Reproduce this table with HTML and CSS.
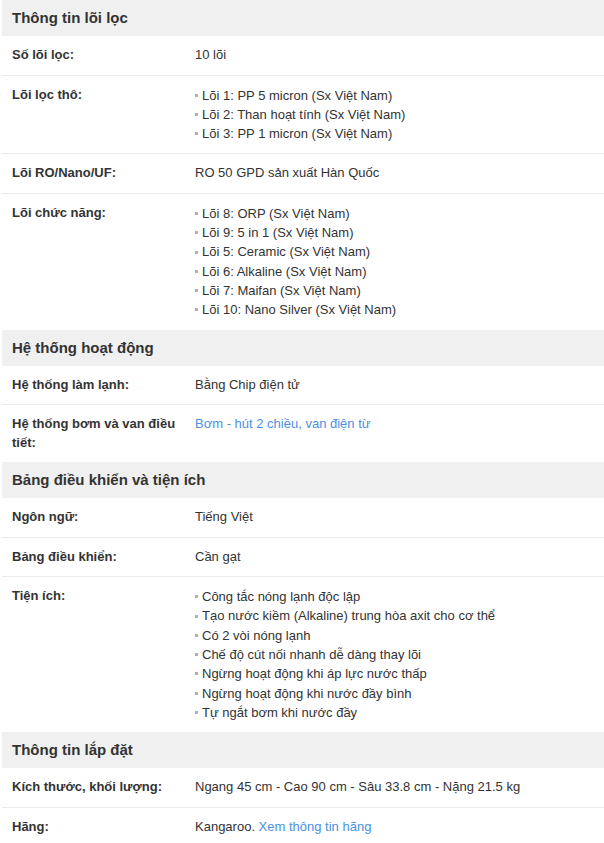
FILE: index.html
```html
<!DOCTYPE html>
<html lang="vi">
<head>
<meta charset="utf-8">
<title>Thông số kỹ thuật</title>
<link rel="stylesheet" href="styles.css">
</head>
<body>
<div class="specs">
  <section class="group">
    <h3 class="group-title">Thông tin lõi lọc</h3>
    <div class="row"><div class="label">Số lõi lọc:</div><div class="value">10 lõi</div></div>
    <div class="row"><div class="label">Lõi lọc thô:</div><div class="value"><ul class="list">
      <li>Lõi 1: PP 5 micron (Sx Việt Nam)</li>
      <li>Lõi 2: Than hoạt tính (Sx Việt Nam)</li>
      <li>Lõi 3: PP 1 micron (Sx Việt Nam)</li>
    </ul></div></div>
    <div class="row"><div class="label">Lõi RO/Nano/UF:</div><div class="value">RO 50 GPD sản xuất Hàn Quốc</div></div>
    <div class="row"><div class="label">Lõi chức năng:</div><div class="value"><ul class="list">
      <li>Lõi 8: ORP (Sx Việt Nam)</li>
      <li>Lõi 9: 5 in 1 (Sx Việt Nam)</li>
      <li>Lõi 5: Ceramic (Sx Việt Nam)</li>
      <li>Lõi 6: Alkaline (Sx Việt Nam)</li>
      <li>Lõi 7: Maifan (Sx Việt Nam)</li>
      <li>Lõi 10: Nano Silver (Sx Việt Nam)</li>
    </ul></div></div>
  </section>
  <section class="group">
    <h3 class="group-title">Hệ thống hoạt động</h3>
    <div class="row"><div class="label">Hệ thống làm lạnh:</div><div class="value">Bằng Chip điện tử</div></div>
    <div class="row"><div class="label">Hệ thống bơm và van điều tiết:</div><div class="value"><a class="link" href="#">Bơm - hút 2 chiều, van điện từ</a></div></div>
  </section>
  <section class="group">
    <h3 class="group-title">Bảng điều khiển và tiện ích</h3>
    <div class="row"><div class="label">Ngôn ngữ:</div><div class="value">Tiếng Việt</div></div>
    <div class="row"><div class="label">Bảng điều khiển:</div><div class="value">Cần gạt</div></div>
    <div class="row"><div class="label">Tiện ích:</div><div class="value"><ul class="list">
      <li>Công tắc nóng lạnh độc lập</li>
      <li>Tạo nước kiềm (Alkaline) trung hòa axit cho cơ thể</li>
      <li>Có 2 vòi nóng lạnh</li>
      <li>Chế độ cút nối nhanh dễ dàng thay lõi</li>
      <li>Ngừng hoạt động khi áp lực nước thấp</li>
      <li>Ngừng hoạt động khi nước đầy bình</li>
      <li>Tự ngắt bơm khi nước đầy</li>
    </ul></div></div>
  </section>
  <section class="group">
    <h3 class="group-title">Thông tin lắp đặt</h3>
    <div class="row"><div class="label">Kích thước, khối lượng:</div><div class="value">Ngang 45 cm - Cao 90 cm - Sâu 33.8 cm - Nặng 21.5 kg</div></div>
    <div class="row"><div class="label">Hãng:</div><div class="value">Kangaroo. <a class="link" href="#">Xem thông tin hãng</a></div></div>
  </section>
</div>
</body>
</html>
```
FILE: styles.css
```css
html, body {
  margin: 0;
  padding: 0;
  background: #fff;
}
body {
  font-family: "Liberation Sans", Arial, sans-serif;
  font-size: 13px;
  color: #333;
}
.specs {
  margin-left: 2px;
  width: 602px;
}
.group-title {
  margin: 0;
  background: #f0f0f0;
  font-size: 15px;
  font-weight: bold;
  line-height: 18px;
  padding: 9px 10px;
  color: #333;
}
.row {
  display: grid;
  grid-template-columns: 193px 1fr;
  border-bottom: 1px solid #ebebeb;
  padding: 10px 0;
  line-height: 18.5px;
}
.row:last-child {
  border-bottom: none;
}
.label {
  font-weight: bold;
  padding: 0 8px 0 10px;
}
.value {
  padding-right: 10px;
}
.list {
  list-style: none;
  margin: 0;
  padding: 0;
}
.list li {
  line-height: 19.3px;
}
.list li::before {
  content: "";
  display: inline-block;
  width: 3px;
  height: 3px;
  background: #b0b0b0;
  vertical-align: middle;
  margin: 0 4px 2px 0;
}
.link {
  color: #4a90e2;
  text-decoration: none;
}
```
